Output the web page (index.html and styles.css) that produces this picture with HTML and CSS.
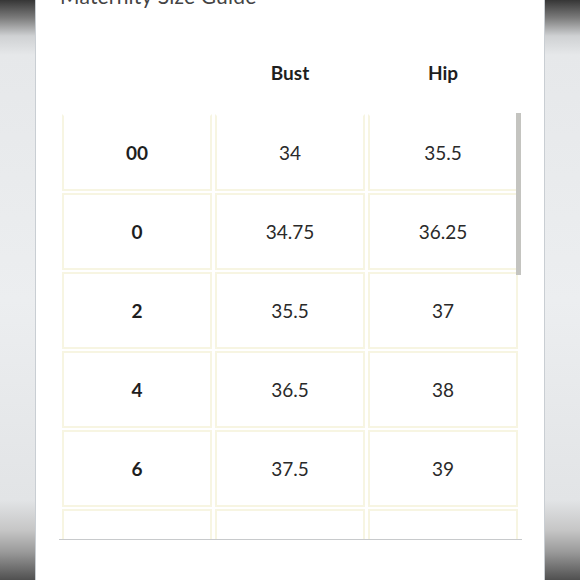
FILE: index.html
```html
<!DOCTYPE html>
<html>
<head>
<meta charset="utf-8">
<link rel="stylesheet" href="styles.css">
</head>
<body>
<div class="frame">
  <div class="strip"></div>
  <div class="panel">
    <h1 class="title">Maternity Size Guide</h1>
    <div class="head">
      <div class="hcell"></div>
      <div class="hcell">Bust</div>
      <div class="hcell">Hip</div>
    </div>
    <div class="scroll">
      <table class="grid">
        <tr><th>00</th><td>34</td><td>35.5</td></tr>
        <tr><th>0</th><td>34.75</td><td>36.25</td></tr>
        <tr><th>2</th><td>35.5</td><td>37</td></tr>
        <tr><th>4</th><td>36.5</td><td>38</td></tr>
        <tr><th>6</th><td>37.5</td><td>39</td></tr>
        <tr><th></th><td></td><td></td></tr>
      </table>
      <div class="thumb"></div>
    </div>
  </div>
  <div class="strip"></div>
</div>
</body>
</html>
```
FILE: styles.css
```css
html, body {
  margin: 0;
  padding: 0;
  background: #fff;
}
body {
  font-family: Lato, "Open Sans", sans-serif;
  color: #222;
}
.frame {
  display: flex;
  width: 580px;
  height: 580px;
  overflow: hidden;
}
.strip {
  width: 35px;
  flex: none;
  background: linear-gradient(to bottom, #363636 0px, #7c7c7c 18px, #cfd1d3 36px, #e6e8ea 55px, #eceef0 300px, #e2e4e6 500px, #c6c6c6 530px, #9a9a9a 552px, #505050 580px);
}
.panel {
  flex: none;
  width: 510px;
  border-left: 1px solid #c9ced3;
  border-right: 1px solid #c9ced3;
  background: #fff;
  padding-left: 23px;
  box-sizing: border-box;
}
.title {
  margin: -18px 0 0 1px;
  height: 27px;
  font-size: 21px;
  line-height: 27px;
  font-weight: 400;
  color: #444;
  letter-spacing: 0.2px;
}
.head {
  display: flex;
  gap: 3px;
  padding-left: 3px;
  height: 104px;
  padding-top: 52px;
  box-sizing: border-box;
  align-items: flex-start;
}
.hcell {
  width: 150px;
  text-align: center;
  font-size: 19px;
  line-height: 24px;
  font-weight: 700;
  color: #1e1e1e;
}
.scroll {
  position: relative;
  width: 463px;
  height: 427px;
  overflow: hidden;
  border-bottom: 1px solid #c8cacc;
  box-sizing: border-box;
}
.grid {
  border-collapse: separate;
  border-spacing: 3px 2px;
  margin-top: -1px;
}
.grid th, .grid td {
  width: 146px;
  height: 73px;
  border: 2px solid #f7f5e2;
  text-align: center;
  vertical-align: middle;
  font-size: 19px;
  padding: 0;
}
.grid tr:first-child th, .grid tr:first-child td {
  border-top-color: transparent;
}
.grid th {
  font-weight: 700;
  color: #1e1e1e;
}
.grid td {
  font-weight: 400;
  color: #2a2a2a;
}
.thumb {
  position: absolute;
  left: 457px;
  top: 0;
  width: 5px;
  height: 162px;
  background: #c4c4c0;
}
```
